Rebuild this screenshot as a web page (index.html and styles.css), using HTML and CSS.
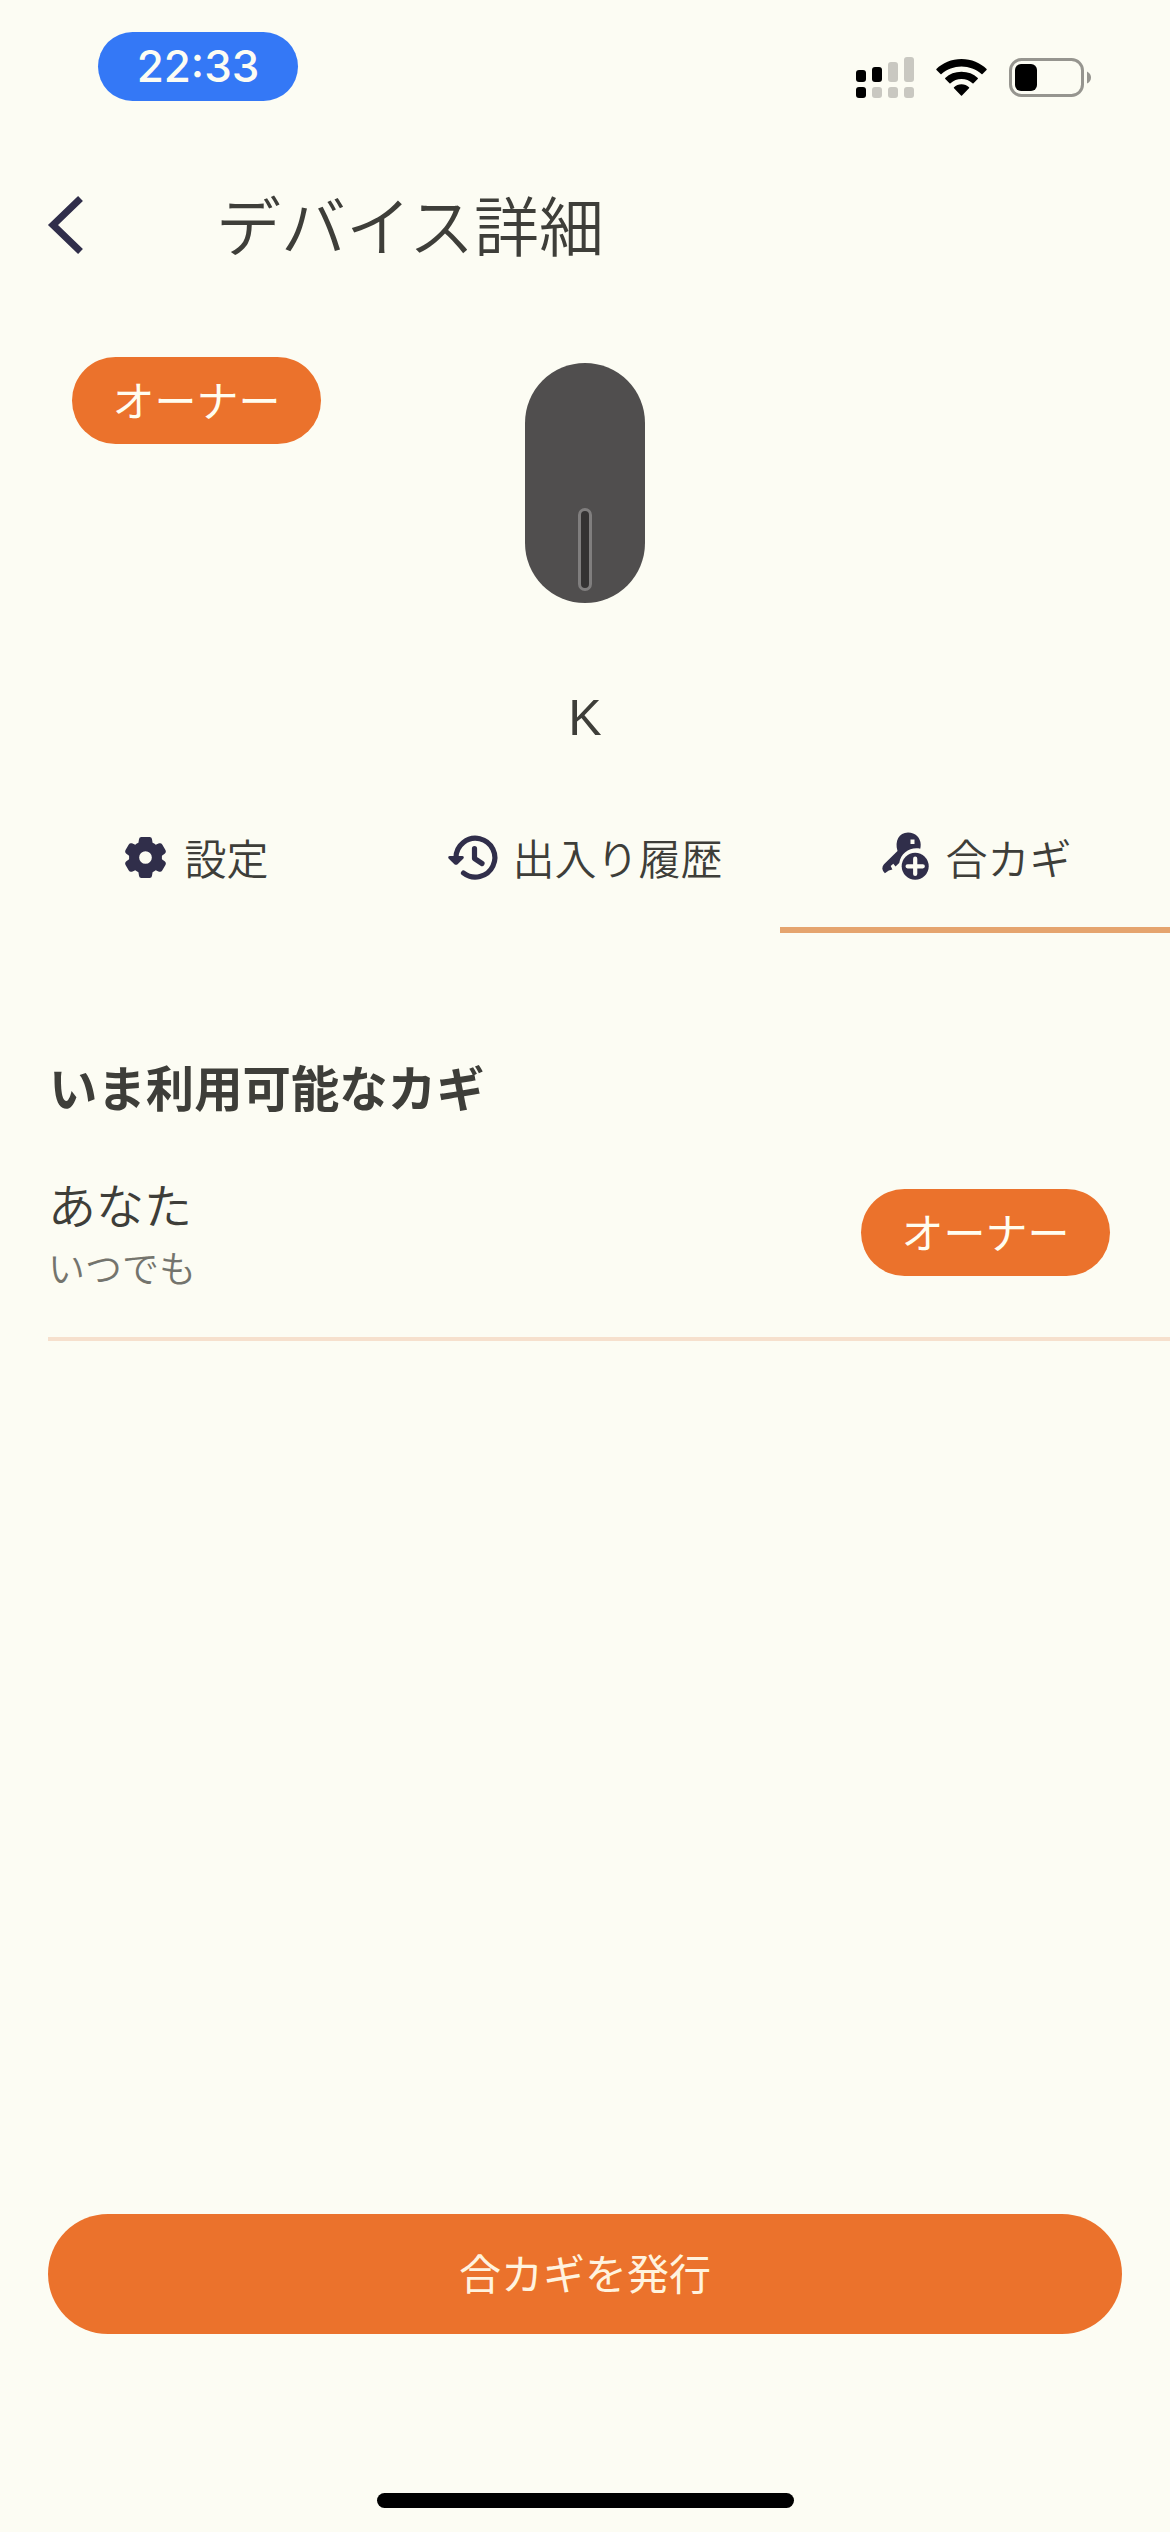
FILE: index.html
```html
<!DOCTYPE html>
<html lang="ja">
<head>
<meta charset="utf-8">
<title>デバイス詳細</title>
<link rel="stylesheet" href="styles.css">
</head>
<body>
<div class="screen">
  <div class="status">
    <span class="clock">22:33</span>
    <div class="status-icons">
      <svg class="signal" viewBox="0 0 58 42">
        <g fill="#000"><rect x="0" y="13" width="10" height="12" rx="3"/><rect x="16" y="10" width="10" height="15" rx="3"/><rect x="0" y="30" width="10" height="11" rx="3"/></g>
        <g fill="#c9c8c1"><rect x="32" y="5" width="10" height="20" rx="3"/><rect x="48" y="0" width="10" height="25" rx="3"/><rect x="16" y="30" width="10" height="11" rx="3"/><rect x="32" y="30" width="10" height="11" rx="3"/><rect x="48" y="30" width="10" height="11" rx="3"/></g>
      </svg>
      <svg class="wifi" viewBox="0 0 51 37">
        <path d="M25.500 0C35.500 0 44.500 4 50.600 10Q51 10.500 50.500 11L46.500 15Q46 15.500 45.500 15C40 10.300 33 7.500 25.500 7.500S11 10.300 5.500 15Q5 15.500 4.500 15L.5 11Q0 10.500.4 10C6.500 4 15.500 0 25.500 0Z"/>
        <path d="M25.500 12.800C32 12.800 37.500 15 41.800 19Q42.200 19.500 41.700 20L37.500 24.200Q37 24.600 36.500 24.200C33.500 21.600 29.700 20 25.500 20S17.500 21.600 14.500 24.200Q14 24.600 13.500 24.200L9.300 20Q8.800 19.500 9.200 19C13.500 15 19 12.800 25.500 12.800Z"/>
        <path d="M25.500 25.200C28.400 25.200 31 26.200 33 28.200Q33.500 28.700 33 29.200L26 36.400Q25.500 36.900 25 36.400L18 29.200Q17.500 28.700 18 28.200C20 26.200 22.600 25.200 25.500 25.200Z"/>
      </svg>
      <svg class="battery" viewBox="0 0 83 39">
        <rect x="1.500" y="1.500" width="72" height="36" rx="11" fill="none" stroke="#96958f" stroke-width="3"/>
        <rect x="6" y="6" width="22" height="27" rx="6"/>
        <path d="M78 13.500Q82 15.500 82 19.500T78 25.500Z" fill="#96958f"/>
      </svg>
    </div>
  </div>

  <header class="header">
    <svg class="back" viewBox="0 0 36 60"><path d="M32.500 3.500L5 30L32.500 56.500" fill="none" stroke="#302e4a" stroke-width="7"/></svg>
    <h1 class="title">デバイス詳細</h1>
  </header>

  <section class="device">
    <span class="badge">オーナー</span>
    <div class="lock"><span class="slit"></span></div>
  </section>
  <p class="device-name">K</p>

  <nav class="tabs">
    <a class="tab">
      <svg class="gear" viewBox="0 0 40 40"><path fill-rule="evenodd" d="M16 0H24Q26 0 26.300 2L26.900 5.700Q28.600 6.500 30 7.500L33.200 6.200Q35.200 5.500 36.300 7.200L39.600 13Q40.500 14.800 39 16L36 18.400V21.600L39 24Q40.500 25.200 39.600 27L36.300 32.800Q35.200 34.500 33.200 33.800L30 32.500Q28.600 33.600 26.900 34.300L26.300 38Q26 40 24 40H16Q14 40 13.700 38L13.100 34.300Q11.400 33.600 10 32.500L6.800 33.800Q4.800 34.500 3.700 32.800L.4 27Q-.5 25.200 1 24L4 21.600V18.400L1 16Q-.5 14.800.4 13L3.700 7.200Q4.800 5.500 6.800 6.200L10 7.500Q11.400 6.500 13.100 5.700L13.700 2Q14 0 16 0ZM20 13.800A6.200 6.200 0 1 0 20 26.200A6.200 6.200 0 1 0 20 13.800Z"/></svg>
      <span>設定</span>
    </a>
    <a class="tab tab-history">
      <svg class="history" viewBox="0 0 48 44">
        <g fill="none" stroke="#302e4a" stroke-width="5.200" stroke-linecap="round" stroke-linejoin="round"><path d="M8 21.500A19.400 19.400 0 1 1 15.500 37"/><path d="M26.500 12.500V22.500L34 27.500"/></g>
        <path d="M1.800 20H14.200Q16.800 20.500 15.200 22.800L9.600 28.200Q8 29.400 6.400 28.200L.8 22.800Q-.8 20.500 1.800 20Z"/>
      </svg>
      <span>出入り履歴</span>
    </a>
    <a class="tab tab-active">
      <svg class="key" viewBox="0 0 47 48">
        <path fill-rule="evenodd" d="M26 .5C33.500 .5 38.700 6 38.700 12.500Q38.700 14.700 38.200 16.700C28.500 14.700 19 20.500 17.200 31L13.500 34.600L11.300 31.700L8.700 34L10.400 37.400L6.800 38.500L2.900 41.200Q.8 39.600.3 36.700Q.3 34 2 32.300L15.500 19C12.500 9 17 .5 26 .5ZM28.500 7.400V11.900H32.500V7.400Z"/>
        <circle cx="33.200" cy="34.300" r="13.500"/>
        <path d="M33.200 26.700V41.900M25.600 34.300H40.800" stroke="#fcfcf3" stroke-width="4.200" stroke-linecap="round"/>
      </svg>
      <span>合カギ</span>
    </a>
  </nav>

  <main class="keys">
    <h2 class="heading">いま利用可能なカギ</h2>
    <div class="key-row">
      <div class="who">
        <span class="name">あなた</span>
        <span class="when">いつでも</span>
      </div>
      <span class="badge">オーナー</span>
    </div>
  </main>

  <footer class="footer">
    <button class="issue">合カギを発行</button>
    <span class="home"></span>
  </footer>
</div>
</body>
</html>
```

FILE: styles.css
```css
* { box-sizing: border-box; margin: 0; padding: 0; }

body {
  background: #fcfcf3;
  color: #3e3e39;
  font-family: "Noto Sans CJK JP", sans-serif;
  font-weight: 350;
}

svg { display: block; flex: none; overflow: visible; }

.screen {
  width: 1170px;
  height: 2532px;
  display: flex;
  flex-direction: column;
  overflow: hidden;
}

.status {
  height: 170px;
  padding: 32px 78px 0 98px;
  display: flex;
  justify-content: space-between;
  align-items: flex-start;
}

.clock {
  width: 200px;
  height: 69px;
  border-radius: 35px;
  background: #3478f6;
  color: #fcfcf3;
  font: 500 44px/69px Inter, sans-serif;
  text-align: center;
}

.status-icons { display: flex; padding-top: 25px; }
.signal { width: 58px; height: 42px; }
.wifi { width: 51px; height: 37px; margin: 2px 22px 0; }
.battery { width: 83px; height: 39px; margin-top: 1px; }

.header {
  height: 110px;
  padding-left: 48px;
  display: flex;
  align-items: center;
}

.back { width: 36px; height: 60px; }

.title {
  height: 110px;
  margin-left: 132px;
  font-size: 65px;
  font-weight: 350;
  line-height: 106px;
}

.device {
  height: 406px;
  padding: 77px 72px 0;
  display: grid;
  grid-template-columns: 1fr 120px 1fr;
  align-items: start;
}

.badge {
  width: 249px;
  height: 87px;
  border-radius: 44px;
  background: #eb722c;
  color: #fffdf0;
  font-size: 42px;
  font-weight: 400;
  line-height: 84px;
  text-align: center;
}

.lock {
  height: 240px;
  margin-top: 6px;
  padding-bottom: 12px;
  border-radius: 60px;
  background: #504e4e;
  display: flex;
  justify-content: center;
  align-items: flex-end;
}

.slit {
  width: 14px;
  height: 83px;
  border: 3px solid #807e7e;
  border-radius: 7px;
  background: #353333;
}

.device-name {
  height: 66px;
  font-family: "Liberation Sans", sans-serif;
  font-size: 50px;
  font-weight: 400;
  line-height: 64px;
  text-align: center;
}

.tabs {
  height: 181px;
  display: grid;
  grid-template-columns: repeat(3, 390px);
}

.tab {
  display: flex;
  justify-content: center;
  align-items: center;
  gap: 18px;
  padding: 36px 0 0 4px;
  font-size: 42px;
  line-height: 60px;
  fill: #302e4a;
  border-bottom: 6px solid transparent;
}

.tab span { margin-top: -2px; }

.tab-history { gap: 16px; padding-left: 1px; }
.tab-active { gap: 16px; border-color: #e5a46e; }
.gear { width: 41px; height: 41px; }
.history { width: 48px; height: 44px; }
.key { width: 47px; height: 48px; margin-top: -3px; }

.keys { flex: 1; padding-left: 48px; }

.heading {
  padding: 117px 0 2px 1px;
  font-size: 48.4px;
  font-weight: 700;
  line-height: 72px;
}

.key-row {
  height: 217px;
  padding: 4px 60px 0 0;
  display: flex;
  justify-content: space-between;
  align-items: center;
  border-bottom: 4px solid #f6e0cd;
}

.who { display: flex; flex-direction: column; }
.name { font-size: 48px; line-height: 68px; }
.when { font-size: 37px; line-height: 60px; color: #74746d; }

.footer {
  height: 318px;
  padding: 0 48px 24px;
  display: flex;
  flex-direction: column;
  justify-content: space-between;
  align-items: center;
}

.issue {
  width: 100%;
  height: 120px;
  padding-bottom: 4px;
  border: 0;
  border-radius: 60px;
  background: #eb722c;
  color: #fff3df;
  font: 400 42px/60px "Noto Sans CJK JP", sans-serif;
}

.home {
  width: 417px;
  height: 15px;
  border-radius: 8px;
  background: #000;
}
```
